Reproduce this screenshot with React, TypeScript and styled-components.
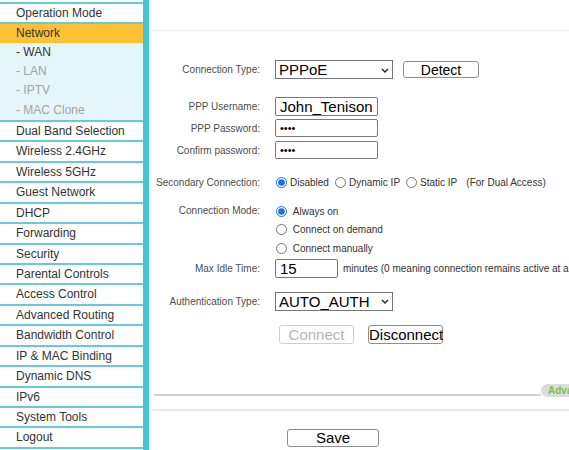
import React from "react";
import styled, { createGlobalStyle } from "styled-components";

const teal = "#47c4cf";
const rowLine = "#66cbd6";
const font = `"Liberation Sans", Arial, sans-serif`;

const Global = createGlobalStyle`
  html, body { margin: 0; padding: 0; overflow: hidden; background: #fff; }
  body { font-family: ${font}; }
`;

const Page = styled.div`
  display: flex;
  width: 569px;
  height: 450px;
  overflow: hidden;
`;

const Sidebar = styled.nav`
  width: 143px;
  flex-shrink: 0;
  padding-top: 2px;
  border-right: 6px solid ${teal};
  background: #fff;
  font: 12px ${font};
`;

const MenuItem = styled.div<{ $active?: boolean; $first?: boolean }>`
  height: 18.45px;
  line-height: 18.45px;
  padding-left: 16px;
  color: #333;
  white-space: nowrap;
  background: ${(p) => (p.$active ? "#fdc233" : "#fff")};
  border-top: ${(p) => (p.$first ? `2px solid ${rowLine}` : "none")};
  border-bottom: ${(p) => (p.$active ? "none" : `2px solid ${rowLine}`)};
`;

const SubMenu = styled.div`
  background: #e4f6f9;
  border-bottom: 2px solid ${rowLine};
`;

const SubItem = styled.div<{ $current?: boolean }>`
  height: 19.25px;
  line-height: 19.25px;
  padding-left: 16px;
  color: ${(p) => (p.$current ? "#333" : "#a3a3a3")};
`;

const Main = styled.main`
  flex: 1;
  min-width: 0;
  overflow: hidden;
  border-left: 3px solid #e8f8fa;
  background: #fff;
`;

const Content = styled.div`
  width: 480px;
`;

const Header = styled.div`
  height: 30px;
  border-bottom: 1px solid #ededed;
`;

const Row = styled.div<{ $h: number; $mt: number; $top?: boolean }>`
  display: flex;
  align-items: ${(p) => (p.$top ? "flex-start" : "center")};
  height: ${(p) => p.$h}px;
  margin-top: ${(p) => p.$mt}px;
  white-space: nowrap;
`;

const Label = styled.label<{ $lh?: number }>`
  width: 108px;
  padding-right: 15px;
  flex-shrink: 0;
  text-align: right;
  font: 10px ${font};
  color: #4d4d4d;
  line-height: ${(p) => (p.$lh ? `${p.$lh}px` : "normal")};
`;

const SelectWrap = styled.div`
  position: relative;
  width: 118px;
  height: 19px;
`;

const Select = styled.select`
  appearance: none;
  -webkit-appearance: none;
  box-sizing: border-box;
  width: 100%;
  height: 100%;
  border: 1px solid #767676;
  border-radius: 0;
  background: #fff;
  color: #000;
  font: 15px ${font};
  padding: 0 0 0 3px;
  margin: 0;
`;

const Chevron = styled.svg`
  position: absolute;
  right: 4px;
  top: 50%;
  margin-top: -2px;
  pointer-events: none;
`;

const TextInput = styled.input<{ $w: number; $h: number; $fs: number }>`
  box-sizing: border-box;
  width: ${(p) => p.$w}px;
  height: ${(p) => p.$h}px;
  border: 1px solid #7a7a7a;
  border-radius: 2px;
  padding: 0 4px;
  margin: 0;
  font: ${(p) => p.$fs}px ${font};
  color: #000;
  background: #fff;
`;

const Btn = styled.button<{ $w: number; $h: number; $fs: number }>`
  box-sizing: border-box;
  width: ${(p) => p.$w}px;
  height: ${(p) => p.$h}px;
  border: 1px solid #8f8f8f;
  border-radius: 3px;
  background: #fff;
  color: #000;
  font: ${(p) => p.$fs}px ${font};
  padding: 0;
  margin: 0;
  line-height: 1;
  &:disabled {
    color: #b5b5b5;
    border-color: #cfcfcf;
  }
`;

const Field = styled.div<{ $gap?: number }>`
  display: flex;
  align-items: center;
  gap: ${(p) => p.$gap ?? 0}px;
`;

const RadioOption = styled.label<{ $h?: number }>`
  display: inline-flex;
  align-items: center;
  gap: 3px;
  margin-right: 5px;
  height: ${(p) => (p.$h ? `${p.$h}px` : "auto")};
  font: 10px ${font};
  color: #333;
`;

const Radio = styled.input.attrs({ type: "radio" })`
  width: 11px;
  height: 11px;
  margin: 0 0 0 1px;
  accent-color: #1a6fe6;
`;

const Note = styled.span`
  margin-left: 4px;
  font: 10px ${font};
  color: #333;
`;

const RadioList = styled.div`
  display: flex;
  flex-direction: column;
`;

const Hint = styled.span`
  margin-left: 5px;
  font: 10px ${font};
  color: #333;
`;

const ButtonRow = styled.div<{ $mt: number; $left: number; $h: number }>`
  display: flex;
  align-items: center;
  gap: 14px;
  height: ${(p) => p.$h}px;
  margin-top: ${(p) => p.$mt}px;
  padding-left: ${(p) => p.$left}px;
`;

const FootBar = styled.div`
  display: flex;
  align-items: flex-end;
  height: 13px;
  margin-top: 40px;
`;

const Rule = styled.div`
  flex: 1;
  margin-left: 2px;
  margin-bottom: 1px;
  border-bottom: 2px solid #d2d2d2;
`;

const Pill = styled.div`
  width: 84px;
  height: 13px;
  flex-shrink: 0;
  padding-left: 7px;
  border-radius: 7px 0 0 7px;
  background: #dcdcdc;
  color: #7cc242;
  font: bold 10px ${font};
  line-height: 13px;
`;

const Divider = styled.div`
  margin-top: 12px;
  border-bottom: 2px solid #e8e8e8;
`;

const SelectBox = ({ value }: { value: string }) => (
  <SelectWrap>
    <Select defaultValue={value}>
      <option>{value}</option>
    </Select>
    <Chevron width="8" height="5" viewBox="0 0 8 5">
      <path d="M1 1 L4 4 L7 1" fill="none" stroke="#222" strokeWidth="1.4" />
    </Chevron>
  </SelectWrap>
);

const menuTop = ["Operation Mode"];
const menuBottom = [
  "Dual Band Selection",
  "Wireless 2.4GHz",
  "Wireless 5GHz",
  "Guest Network",
  "DHCP",
  "Forwarding",
  "Security",
  "Parental Controls",
  "Access Control",
  "Advanced Routing",
  "Bandwidth Control",
  "IP & MAC Binding",
  "Dynamic DNS",
  "IPv6",
  "System Tools",
  "Logout",
];
const subItems = ["- WAN", "- LAN", "- IPTV", "- MAC Clone"];

export default function App() {
  return (
    <>
      <Global />
      <Page>
        <Sidebar>
          {menuTop.map((m) => (
            <MenuItem key={m} $first>
              {m}
            </MenuItem>
          ))}
          <MenuItem $active>Network</MenuItem>
          <SubMenu>
            {subItems.map((s, i) => (
              <SubItem key={s} $current={i === 0}>
                {s}
              </SubItem>
            ))}
          </SubMenu>
          {menuBottom.map((m) => (
            <MenuItem key={m}>{m}</MenuItem>
          ))}
        </Sidebar>
        <Main>
          <Content>
            <Header />
            <Row $h={20} $mt={28.5}>
              <Label>Connection Type:</Label>
              <Field $gap={10}>
                <SelectBox value="PPPoE" />
                <Btn $w={76} $h={17} $fs={14}>
                  Detect
                </Btn>
              </Field>
            </Row>
            <Row $h={22} $mt={15.5}>
              <Label>PPP Username:</Label>
              <TextInput $w={103} $h={19} $fs={15} defaultValue="John_Tenison" />
            </Row>
            <Row $h={22} $mt={0}>
              <Label>PPP Password:</Label>
              <TextInput $w={103} $h={18} $fs={11} type="password" defaultValue="abcd" />
            </Row>
            <Row $h={22} $mt={0}>
              <Label>Confirm password:</Label>
              <TextInput $w={103} $h={18} $fs={11} type="password" defaultValue="abcd" />
            </Row>
            <Row $h={20} $mt={11}>
              <Label>Secondary Connection:</Label>
              <Field>
                <RadioOption>
                  <Radio name="sec" defaultChecked />
                  Disabled
                </RadioOption>
                <RadioOption>
                  <Radio name="sec" />
                  Dynamic IP
                </RadioOption>
                <RadioOption>
                  <Radio name="sec" />
                  Static IP
                </RadioOption>
                <Note>(For Dual Access)</Note>
              </Field>
            </Row>
            <Row $h={55.5} $mt={10} $top>
              <Label $lh={18.5}>Connection Mode:</Label>
              <RadioList>
                <RadioOption $h={18.5}>
                  <Radio name="mode" defaultChecked />
                  &nbsp;Always on
                </RadioOption>
                <RadioOption $h={18.5}>
                  <Radio name="mode" />
                  &nbsp;Connect on demand
                </RadioOption>
                <RadioOption $h={18.5}>
                  <Radio name="mode" />
                  &nbsp;Connect manually
                </RadioOption>
              </RadioList>
            </Row>
            <Row $h={20} $mt={1}>
              <Label>Max Idle Time:</Label>
              <Field>
                <TextInput $w={63} $h={19} $fs={15} defaultValue="15" />
                <Hint>minutes (0 meaning connection remains active at all times.)</Hint>
              </Field>
            </Row>
            <Row $h={20} $mt={12.5}>
              <Label>Authentication Type:</Label>
              <SelectBox value="AUTO_AUTH" />
            </Row>
            <ButtonRow $mt={13.5} $left={127} $h={19}>
              <Btn $w={75} $h={19} $fs={15} disabled>
                Connect
              </Btn>
              <Btn $w={75} $h={19} $fs={15}>
                Disconnect
              </Btn>
            </ButtonRow>
            <FootBar>
              <Rule />
              <Pill>Advanced</Pill>
            </FootBar>
            <Divider />
            <ButtonRow $mt={18} $left={135} $h={18}>
              <Btn $w={92} $h={18} $fs={15}>
                Save
              </Btn>
            </ButtonRow>
          </Content>
        </Main>
      </Page>
    </>
  );
}
